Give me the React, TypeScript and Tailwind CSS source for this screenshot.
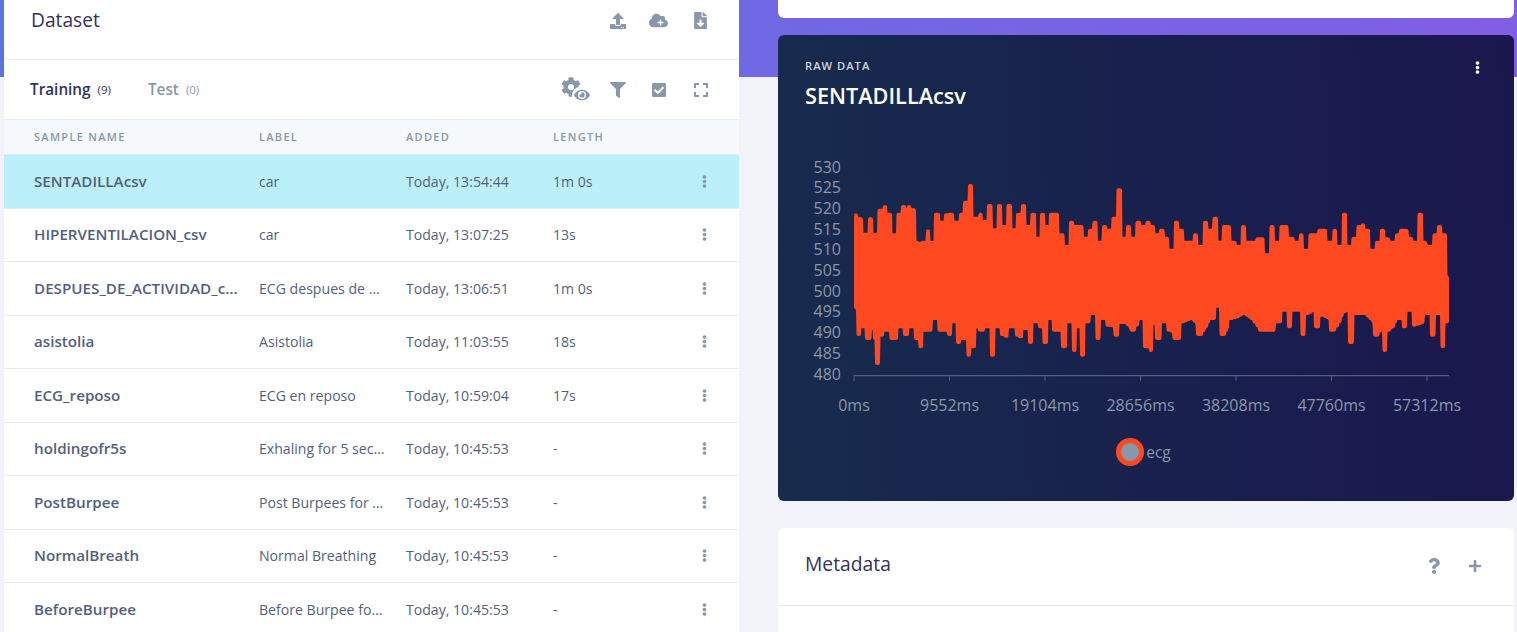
import React from 'react';
import { FaCheckSquare, FaCloud, FaCog, FaEllipsisV, FaExpand, FaEye, FaFileDownload, FaFilter, FaPlus, FaQuestion, FaUpload } from 'react-icons/fa';

const font = { fontFamily: '"Open Sans", sans-serif' };

const samples = [
    { name: 'SENTADILLAcsv', label: 'car', added: 'Today, 13:54:44', length: '1m 0s', active: true },
    { name: 'HIPERVENTILACION_csv', label: 'car', added: 'Today, 13:07:25', length: '13s' },
    { name: 'DESPUES_DE_ACTIVIDAD_csv', label: 'ECG despues de actividad', added: 'Today, 13:06:51', length: '1m 0s' },
    { name: 'asistolia', label: 'Asistolia', added: 'Today, 11:03:55', length: '18s' },
    { name: 'ECG_reposo', label: 'ECG en reposo', added: 'Today, 10:59:04', length: '17s' },
    { name: 'holdingofr5s', label: 'Exhaling for 5 seconds', added: 'Today, 10:45:53', length: '-' },
    { name: 'PostBurpee', label: 'Post Burpees for 5 seconds', added: 'Today, 10:45:53', length: '-' },
    { name: 'NormalBreath', label: 'Normal Breathing', added: 'Today, 10:45:53', length: '-' },
    { name: 'BeforeBurpee', label: 'Before Burpee for 5 seconds', added: 'Today, 10:45:53', length: '-' },
];

// envelope of the signal, read off the picture at 3x: [x, y] pairs
const upperA = [[224,220],[232,220],[236,232],[246,232],[250,278],[262,278],[266,232],[276,232],[280,278],[290,278],[295,206],[306,206],[313,195],[318,195],[324,218],[332,218],[340,280],[348,280],[352,218],[360,218],[368,195],[376,195],[380,205],[384,195],[390,195],[396,205],[404,205],[410,302],[420,305],[430,302],[436,302],[440,268],[448,268],[452,303],[460,303],[466,218],[476,218],[482,242],[490,242],[496,220],[504,220],[508,218],[518,218],[524,242],[534,242],[540,218],[548,218],[552,182],[562,182],[568,132],[576,132],[582,230],[594,230],[598,218],[604,218],[610,240],[620,240],[624,192],[634,192],[640,265],[650,265],[654,192],[662,192],[668,255],[678,255],[682,192],[692,192],[698,265],[706,265],[712,218],[720,218],[726,192],[734,192],[740,255],[750,255],[754,218],[764,218],[770,290],[778,290],[782,218],[792,218],[798,255],[806,255],[810,218],[834,218],[840,280],[850,280],[856,315],[864,315],[870,242],[878,242],[884,255],[900,255]];
const lowerA = [[222,505],[228,510],[232,588],[240,588],[244,565],[252,565],[258,600],[272,600],[276,570],[284,600],[288,675],[297,675],[302,590],[310,590],[314,575],[326,575],[332,600],[352,600],[356,565],[366,565],[374,588],[384,588],[390,565],[400,565],[404,600],[414,600],[418,625],[426,625],[432,575],[454,575],[460,540],[470,540],[476,575],[498,575],[504,588],[512,588],[518,550],[526,550],[532,612],[540,612],[546,600],[558,600],[562,650],[570,650],[576,625],[584,625],[590,565],[598,575],[610,575],[618,565],[628,565],[634,650],[642,650],[648,565],[658,565],[664,588],[682,600],[688,565],[702,565],[708,590],[726,600],[730,570],[742,570],[748,612],[756,612],[762,550],[772,550],[778,565],[786,565],[790,612],[800,612],[806,540],[814,540],[820,575],[840,575],[846,625],[858,625],[864,550],[874,550],[878,636],[886,636],[892,565],[900,565]];
const upperB = [[0,255],[8,255],[12,290],[22,290],[28,266],[36,266],[40,242],[50,242],[54,302],[64,302],[70,255],[78,255],[84,266],[92,266],[98,230],[108,230],[112,145],[122,145],[128,290],[136,290],[140,255],[150,255],[154,290],[164,290],[170,242],[180,242],[186,255],[194,255],[200,242],[208,242],[214,255],[222,255],[228,280],[236,280],[240,266],[250,266],[256,290],[264,290],[270,326],[280,326],[285,242],[294,242],[300,266],[308,266],[314,302],[336,302],[342,280],[350,280],[356,315],[366,315],[372,242],[380,242],[386,266],[396,266],[400,230],[410,230],[416,302],[424,302],[428,255],[450,255],[456,302],[466,302],[472,315],[480,315],[486,255],[494,255],[500,302],[524,302],[530,292],[550,292],[556,340],[566,340],[572,255],[580,255],[586,302],[596,302],[602,255],[622,255],[628,290],[640,290],[646,302],[654,302],[660,280],[668,280],[672,326],[684,326],[688,280],[710,280],[716,266],[738,266],[744,302],[756,302],[760,266],[768,266],[774,315],[784,315],[788,218],[798,218],[804,315],[812,315],[818,290],[828,290],[832,255],[842,255],[848,242],[852,242],[858,266],[866,266],[872,326],[884,326],[888,302],[898,302],[902,266],[912,266],[918,292],[926,292],[932,302],[942,302],[948,280],[956,280],[960,266],[982,266],[988,290],[996,290],[1002,302],[1010,302],[1016,218],[1026,218],[1032,302],[1044,315],[1056,315],[1060,280],[1070,280],[1074,255],[1082,255],[1088,280],[1098,280],[1103,405],[1106,410]];
const lowerB = [[0,650],[12,650],[18,550],[28,550],[34,525],[44,525],[50,600],[58,600],[64,540],[74,540],[80,560],[98,562],[104,590],[114,590],[120,552],[130,552],[146,565],[152,575],[160,575],[178,540],[186,540],[192,625],[204,625],[210,636],[216,636],[222,555],[230,600],[242,612],[246,550],[256,550],[264,575],[276,580],[280,600],[300,600],[306,550],[330,540],[346,555],[352,588],[360,588],[376,565],[390,540],[404,540],[410,503],[416,503],[422,588],[430,588],[444,565],[450,540],[470,535],[488,525],[510,540],[536,575],[576,575],[582,588],[590,550],[604,550],[608,515],[618,515],[624,565],[632,565],[638,515],[660,515],[664,588],[672,588],[680,525],[700,515],[706,565],[716,565],[722,530],[744,540],[752,575],[760,575],[776,550],[790,520],[802,515],[808,612],[818,612],[824,525],[850,525],[876,550],[882,590],[890,590],[906,565],[910,636],[918,636],[924,575],[936,565],[950,540],[964,540],[970,565],[978,565],[984,515],[994,515],[1000,560],[1030,550],[1036,525],[1048,525],[1054,590],[1062,590],[1070,525],[1080,525],[1084,625],[1092,625],[1098,550],[1106,550]];

const toCard = (pts: number[][], ox: number) => pts.map(([x, y]) => [ox + x / 3, y / 3]);

// y of the envelope at x: short slopes read as vertical steps, long ones as a staircase
const envelopeAt = (pts: number[][], x: number) => {
    if (x <= pts[0][0]) return pts[0][1];
    for (let i = 1; i < pts.length; i++) {
        const [ax, ay] = pts[i - 1];
        const [bx, by] = pts[i];
        if (x <= bx) {
            if (bx - ax < 4) return x < (ax + bx) / 2 ? ay : by;
            const stepped = Math.floor((x - ax) / 2.7) * 2.7;
            return ay + ((by - ay) * stepped) / (bx - ax);
        }
    }
    return pts[pts.length - 1][1];
};

// outline is pulled in, then the 4px round-joined stroke grows it back out
const radius = 1.6;
const lineWidth = 4;
const grow = lineWidth / 2 - radius;
const offsets = [-1.6, -1.2, -0.8, -0.4, 0, 0.4, 0.8, 1.2, 1.6].map((d) => [d, Math.sqrt(radius * radius - d * d) + grow]);

const buildSignal = () => {
    const upper = [...toCard(upperA, 2), ...toCard(upperB, 302)];
    const lower = [...toCard(lowerA, 2), ...toCard(lowerB, 302)];
    const top: string[] = [];
    const bottom: string[] = [];
    for (let x = 78; x <= 669; x += 0.5) {
        const t = Math.max(...offsets.map(([d, h]) => envelopeAt(upper, x + d) + h));
        const b = Math.min(...offsets.map(([d, h]) => envelopeAt(lower, x + d) - h));
        top.push(`${x.toFixed(1)},${t.toFixed(1)}`);
        bottom.unshift(`${x.toFixed(1)},${b.toFixed(1)}`);
    }
    return [...top, ...bottom].join(' ');
};

const signal = buildSignal();

const yTicks = [530, 525, 520, 515, 510, 505, 500, 495, 490, 485, 480];
const xTicks = ['0ms', '9552ms', '19104ms', '28656ms', '38208ms', '47760ms', '57312ms'];

const RawChart = () => (
    <svg width="736" height="235" viewBox="0 0 736 235" className="block overflow-visible">
        {yTicks.map((t, i) => (
            <text key={t} x="63" y={i * 20.7 + 32.5} textAnchor="end" fontSize="16" fill="#8898aa" style={font}>{t}</text>
        ))}
        <polygon points={signal} fill="#ff4921" stroke="#ff4921" strokeWidth={lineWidth} strokeLinejoin="round" />
    </svg>
);

const XAxis = () => (
    <svg width="736" height="42" viewBox="0 0 736 42" className="block">
        <line x1="76" y1="0.5" x2="671" y2="0.5" stroke="#525f7f" strokeWidth="1.5" />
        {xTicks.map((t, i) => (
            <g key={t}>
                <line x1={76 + i * 95.5} y1="0" x2={76 + i * 95.5} y2="6" stroke="#525f7f" />
                <text x={76 + i * 95.5} y="36" textAnchor="middle" fontSize="16" fill="#8898aa" style={font}>{t}</text>
            </g>
        ))}
    </svg>
);

const CogEye = () => (
    <span className="relative block h-[26px] w-[30px]">
        <FaCog className="absolute left-0 top-0 text-[20px] text-[#8898aa]" />
        <span className="absolute left-[11px] top-[10px] flex h-[16px] w-[19px] items-center justify-center rounded-full bg-white">
            <FaEye className="text-[16px] text-[#8898aa]" />
        </span>
    </span>
);

const CloudPlus = () => (
    <span className="relative block text-[19px] text-[#8898aa]">
        <FaCloud />
        <FaPlus className="absolute left-[7.5px] top-[7.5px] text-[7px] text-white" />
    </span>
);

const SampleRow = ({ name, label, added, length, active }: { name: string; label: string; added: string; length: string; active?: boolean }) => (
    <div className={`grid h-[53.5px] grid-cols-[225px_147px_147px_1fr_70px] items-center border-b border-[#e9ecef] pl-[30px] ${active ? 'bg-[#bbf0fb]' : 'bg-white'}`}>
        <div className="w-[205px] truncate text-[15.2px] font-semibold text-[#525f7f]">{name}</div>
        <div className="w-[126px] truncate text-[14.1px] text-[#525f7f]">{label}</div>
        <div className="text-[14.1px] text-[#525f7f]">{added}</div>
        <div className="text-[14.1px] text-[#525f7f]">{length}</div>
        <div className="flex justify-center text-[13px] text-[#8898aa]"><FaEllipsisV /></div>
    </div>
);

export default function App() {
    return (
        <div className="h-[632px] w-[1517px] overflow-hidden bg-[#f1f3f9] bg-[linear-gradient(87deg,#5e72e4,#825ee4)] bg-[length:100%_77px] bg-no-repeat pl-1" style={font}>
            <div className="flex items-start gap-[39px]">
                <div className="w-[735px] bg-white">
                    <div className="flex h-[60px] items-start justify-between border-b border-[#e9ecef] pl-[27px] pr-[30px] pt-[7px]">
                        <h3 className="text-[19.2px] font-medium leading-[25px] text-[#32325d]">Dataset</h3>
                        <div className="flex items-center pt-[4px] text-[#8898aa]">
                            <FaUpload className="text-[16px]" />
                            <span className="ml-[23.5px]"><CloudPlus /></span>
                            <FaFileDownload className="ml-[24px] text-[17px]" />
                        </div>
                    </div>
                    <div className="flex h-[60px] items-center justify-between border-b border-[#e9ecef] pl-[26px] pr-[30px]">
                        <div className="flex items-center">
                            <span className="text-[15.3px] font-semibold text-[#32325d]">Training</span>
                            <span className="ml-[7px] text-[11.5px] text-[#32325d]">(9)</span>
                            <span className="ml-[37px] text-[15.3px] font-semibold text-[#8898aa]">Test</span>
                            <span className="ml-[7px] text-[11.5px] text-[#8898aa]">(0)</span>
                        </div>
                        <div className="flex items-center text-[#8898aa]">
                            <CogEye />
                            <FaFilter className="ml-[18.5px] text-[16px]" />
                            <FaCheckSquare className="ml-[25.5px] text-[16px]" />
                            <FaExpand className="ml-[26px] text-[16px]" />
                        </div>
                    </div>
                    <div className="grid h-[35px] grid-cols-[225px_147px_147px_1fr_70px] items-center border-b border-[#e9ecef] bg-[#f6f9fc] pl-[30px] pt-px text-[11px] font-semibold uppercase tracking-[1.3px] text-[#8898aa]">
                        <div>Sample name</div>
                        <div>Label</div>
                        <div>Added</div>
                        <div>Length</div>
                    </div>
                    {samples.map((s) => (
                        <SampleRow key={s.name} {...s} />
                    ))}
                </div>
                <div className="flex w-[736px] flex-col">
                    <div className="h-[18px] rounded-b-[6px] bg-white" />
                    <div className="mt-[17px] h-[466px] rounded-[6px] bg-[linear-gradient(87deg,#172b4d,#1a174d)]">
                        <div className="flex items-start justify-between pl-[27px] pr-[30px] pt-[24px]">
                            <div>
                                <div className="text-[11.2px] font-semibold uppercase leading-[14px] tracking-[1px] text-[#ced4da]">Raw data</div>
                                <div className="mt-[8px] text-[21.7px] font-semibold leading-[29px] text-white">SENTADILLAcsv</div>
                            </div>
                            <FaEllipsisV className="mt-[2px] text-[13px] text-white" />
                        </div>
                        <div className="mt-[30px]">
                            <RawChart />
                            <XAxis />
                        </div>
                        <div className="mt-[21px] flex items-center justify-center pr-[5px]">
                            <span className="box-border h-[28px] w-[28px] rounded-full border-[5px] border-[#ff4921] bg-[#8898aa]" />
                            <span className="ml-[2px] text-[15.5px] leading-[24px] text-[#8898aa]">ecg</span>
                        </div>
                    </div>
                    <div className="mt-[27px] rounded-[6px] bg-white">
                        <div className="flex h-[78px] items-center justify-between border-b border-[#e9ecef] pl-[27px] pr-[32.5px]">
                            <h3 className="pb-[4px] text-[19.3px] font-medium text-[#32325d]">Metadata</h3>
                            <div className="flex items-center gap-[26px] pb-[2px] text-[#8898aa]">
                                <FaQuestion className="text-[16px]" />
                                <FaPlus className="text-[14px]" />
                            </div>
                        </div>
                        <div className="h-[40px]" />
                    </div>
                </div>
            </div>
        </div>
    );
}
